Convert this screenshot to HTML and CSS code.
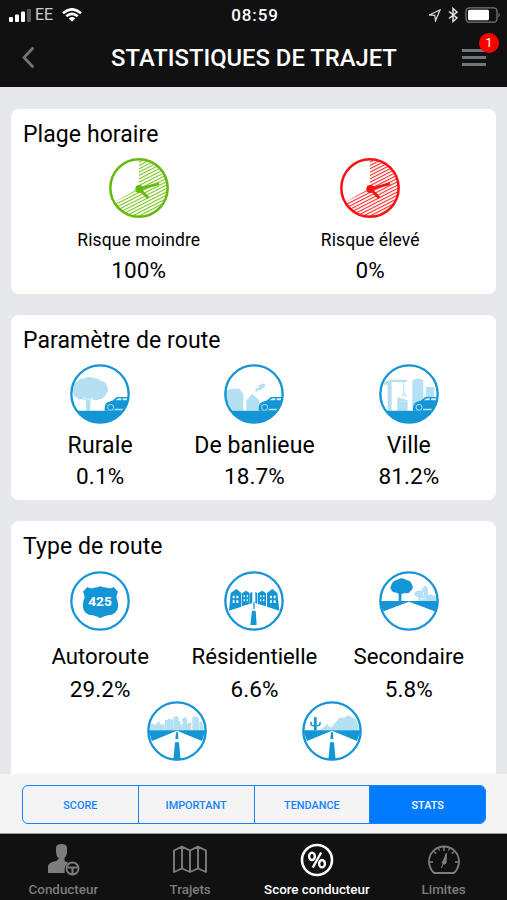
FILE: index.html
```html
<!DOCTYPE html>
<html lang="fr">
<head>
<meta charset="utf-8">
<title>Statistiques de trajet</title>
<link rel="stylesheet" href="styles.css">
</head>
<body>
<svg class="defs" width="0" height="0" aria-hidden="true">
  <defs>
    <pattern id="hatch-green" width="9" height="9" patternUnits="userSpaceOnUse" patternTransform="rotate(-27)"><rect width="9" height="3.4" fill="#7cc520"/></pattern>
    <pattern id="hatch-red" width="9" height="9" patternUnits="userSpaceOnUse" patternTransform="rotate(-27)"><rect width="9" height="3.4" fill="#fb2a2a"/></pattern>
    <symbol id="hands" viewBox="53 38 180 180">
      <circle cx="143" cy="128" r="86" fill="none" stroke="currentColor" stroke-width="7.500"/>
      <circle cx="144" cy="131" r="12" fill="currentColor"/>
      <path d="M144 131 203 115M144 131 171 158" fill="none" stroke="currentColor" stroke-width="8.500"/>
    </symbol>
    <clipPath id="disc"><circle cx="90" cy="90" r="87"/></clipPath>
    <symbol id="car" viewBox="0 0 180 180">
      <path d="M104 134 106 119Q116 111 127 110L141 99H180V140H104Z" fill="#1495d6"/>
      <path d="M136 109 145 103H154V109ZM158 103H176V109H158Z" fill="#d8eef9"/>
      <path d="M106 122H112" stroke="#8fcdec" stroke-width="2"/>
      <circle cx="122" cy="130" r="9" fill="#1495d6" stroke="#cfeaf7" stroke-width="2.500"/>
      <path d="M134 136H180" stroke="#e8f5fb" stroke-width="3"/>
    </symbol>
  </defs>
</svg>
<div class="app">
  <header class="top">
    <div class="status">
      <div class="carrier">
        <svg width="22" height="14" viewBox="0 0 22 14"><g fill="#fff"><rect y="9" width="4" height="5" rx="1"/><rect x="6" y="6.500" width="4" height="7.500" rx="1"/><rect x="12" y="3.500" width="4" height="10.500" rx="1"/><rect x="18" y="1" width="4" height="13" rx="1" fill="#555"/></g></svg>
        <span class="ee">EE</span>
        <svg class="wifi" width="20" height="14" viewBox="0 0 20 14"><g fill="none" stroke="#fff" stroke-width="2.600"><path d="M1 5.200Q10-2.600 19 5.200"/><path d="M4.300 8.300Q10 3.500 15.700 8.300"/></g><path d="M6.700 10.300Q10 7.500 13.300 10.300L10 13.800Z" fill="#fff"/></svg>
      </div>
      <div class="clock">08:59</div>
      <div class="indicators">
        <svg width="13" height="13" viewBox="0 0 13 13"><path d="M1.200 6 12 1 7.500 11.800 6.800 6.300Z" fill="none" stroke="#d4d4d4" stroke-width="1.300"/></svg>
        <svg width="10" height="16" viewBox="0 0 10 16"><path d="M1 4.500 9 11 5 14.500V1.500L9 5 1 11.500" fill="none" stroke="#e4e4e4" stroke-width="1.500"/></svg>
        <svg width="36" height="16" viewBox="0 0 36 16"><rect x="1" y=".8" width="31" height="14.400" rx="3.500" fill="none" stroke="#777" stroke-width="1.300"/><rect x="3" y="2.700" width="21" height="10.600" rx="1.500" fill="#fff"/><path d="M33.500 5.500Q36 8 33.500 10.500Z" fill="#777"/></svg>
      </div>
    </div>
    <nav class="titlebar">
      <svg class="back" width="12" height="21" viewBox="0 0 12 21"><path d="M10.500 1.500 2 10.500 10.500 19.500" fill="none" stroke="#72767a" stroke-width="2.700" stroke-linecap="round"/></svg>
      <h1>STATISTIQUES DE TRAJET</h1>
      <div class="menu"><i></i><i></i><i></i><span class="badge">1</span></div>
    </nav>
  </header>

  <main>
    <section class="card">
      <h2>Plage horaire</h2>
      <div class="row halves">
        <div class="stat green">
          <svg class="icon" viewBox="53 38 180 180"><path d="M143 128V44A84 84 0 1 1 70 170Z" fill="url(#hatch-green)"/><use href="#hands" x="53" y="38" width="180" height="180"/></svg>
          <div class="label">Risque moindre</div><div class="value">100%</div>
        </div>
        <div class="stat red">
          <svg class="icon" viewBox="53 38 180 180"><path d="M143 128V44A84 84 0 1 1 70 170Z" fill="url(#hatch-red)"/><use href="#hands" x="53" y="38" width="180" height="180"/></svg>
          <div class="label">Risque élevé</div><div class="value">0%</div>
        </div>
      </div>
    </section>

    <section class="card">
      <h2>Paramètre de route</h2>
      <div class="row area">
        <div class="stat">
          <svg class="icon" viewBox="0 0 180 180"><g clip-path="url(#disc)"><path d="M10 75Q8 58 23 52Q30 42 43 43Q57 34 72 43Q86 42 92 51Q108 51 110 65Q120 79 108 91Q103 104 88 106Q78 112 66 105L61 112V140H48V110L39 106Q25 109 20 101Q6 96 10 75Z" fill="#b5dff3"/><path d="M39 100 53 107 70 101" fill="none" stroke="#e2f3fb" stroke-width="3"/><use href="#car" width="180" height="180"/><path d="M0 140H180V180H0Z" fill="#1495d6"/></g><circle class="ring" cx="90" cy="90" r="86"/></svg>
          <div class="label">Rurale</div><div class="value">0.1%</div>
        </div>
        <div class="stat">
          <svg class="icon" viewBox="0 0 180 180"><g clip-path="url(#disc)"><g fill="#b5dff3"><path d="M0 78H14L20 74H46L58 90V140H0ZM67 109 85 89 106 109V140H67ZM94 79Q95 68 106 71Q99 61 111 62Q113 55 122 61Q127 68 117 72Q109 83 102 78L96 87Z"/></g><use href="#car" width="180" height="180"/><path d="M0 140H180V180H0Z" fill="#1495d6"/></g><circle class="ring" cx="90" cy="90" r="86"/></svg>
          <div class="label">De banlieue</div><div class="value">18.7%</div>
        </div>
        <div class="stat">
          <svg class="icon" viewBox="0 0 180 180"><g clip-path="url(#disc)"><g fill="#b5dff3"><path d="M15 55 35 47H83V54H38V140H26V62H15ZM55 99 86 109V140H55ZM100 49Q118 38 133 49V140H100ZM141 69H166V140H141Z"/><path d="M74 54V83M70 95 74 83 82 95Z" fill="none" stroke="#b5dff3" stroke-width="3"/></g><path d="M102 54H130M60 112H82" stroke="#d5edf8" stroke-width="2"/><use href="#car" x="-2" width="180" height="180"/><path d="M0 140H180V180H0Z" fill="#1495d6"/></g><circle class="ring" cx="90" cy="90" r="86"/></svg>
          <div class="label">Ville</div><div class="value">81.2%</div>
        </div>
      </div>
    </section>

    <section class="card last">
      <h2>Type de route</h2>
      <div class="row road">
        <div class="stat">
          <svg class="icon" viewBox="44 32 180 180"><circle class="ring" cx="134" cy="122" r="86"/><path d="M96 80Q107 86 116 82L126 81 135 78 144 81 157 82Q166 86 175 80L188 94Q180 109 187 122Q194 154 169 163Q147 165 135 174Q123 165 101 163Q77 155 84 122Q91 109 83 94Z" fill="#1495d6"/><text class="shield" x="134" y="137" text-anchor="middle">425</text></svg>
          <div class="label">Autoroute</div><div class="value">29.2%</div>
        </div>
        <div class="stat">
          <svg class="icon" viewBox="42 32 180 180"><g fill="#1495d6"><path d="M62 98 79 86 94 98V139L57 151ZM96 99 108 91 119 98V131L96 138ZM120 99 127 94V128L120 131ZM202 98 187 86 171 98V139L208 151ZM168 99 157 91 144 98V131L168 138ZM142 99 136 94V128L142 131ZM130 126H134V146H130ZM126 151H137L140 194H121Z"/></g><path d="M68 106H74V114H68ZM79 106H85V114H79ZM68 120H74V128H68ZM79 120H85V128H79ZM101 105H105V111H101ZM110 105H114V111H110ZM101 117H105V123H101ZM110 117H114V123H110ZM180 106H186V114H180ZM191 106H197V114H191ZM180 120H186V128H180ZM191 120H197V128H191ZM150 105H154V111H150ZM159 105H163V111H159ZM150 117H154V123H150ZM159 117H163V123H159Z" fill="#fff"/><circle class="ring" cx="132" cy="122" r="86"/></svg>
          <div class="label">Résidentielle</div><div class="value">6.6%</div>
        </div>
        <div class="stat">
          <svg class="icon" viewBox="39 32 180 180"><path d="M43 122H215V134L206 153 129 124 53 153 44 134Z" fill="#1495d6"/><path d="M98 122V100L88 96Q80 98 76 89Q70 80 78 70Q81 61 92 59Q107 48 121 59Q133 61 137 70Q144 82 136 90Q128 102 115 98L106 102V122Z" fill="#1495d6"/><path d="M157 122V111Q142 108 146 97Q154 88 168 91Q170 77 179 76Q187 80 186 94V104Q194 99 200 105L208 106 213 122Z" fill="#b5dff3"/><path d="M173 94 171 103 177 111M162 115H181" fill="none" stroke="#fff" stroke-width="2"/><circle class="ring" cx="129" cy="122" r="86"/></svg>
          <div class="label">Secondaire</div><div class="value">5.8%</div>
        </div>
      </div>
      <div class="row more">
        <div class="stat">
          <svg class="icon" viewBox="52 34 180 180"><path d="M62 122V104L68 100 75 107 80 102 84 96H90V104H94V122H106V91H114V88H126V92H131V83L141 78 147 84V94H152V104H158V88L166 81 172 88V102H176V99H184V122H188V84L194 79 207 84V96H217L222 122Z" fill="#b5dff3"/><path d="M94 104H106V122H94Z" fill="#b5dff3"/><path d="M104 95V121M132 94V121M157 97V121M186 99V121M209 97V121" stroke="#dff2fa" stroke-width="2"/><path d="M56 122H228L217 154 142 123 67 154Z" fill="#1495d6"/><path d="M139 128H145L146 148H137ZM136 158H148L153 212H131Z" fill="#1495d6"/><circle class="ring" cx="142" cy="124" r="86"/></svg>
        </div>
        <div class="stat">
          <svg class="icon" viewBox="513 34 180 180"><path d="M568 122 588 104 600 114 614 98 625 84 640 84 651 76 661 82 675 88 685 122Z" fill="#b5dff3"/><path d="M549 122V84Q553 79 557 84V122Z" fill="#1495d6"/><path d="M540 96V102Q540 108 549 108M567 97V103Q567 108 557 108" fill="none" stroke="#1495d6" stroke-width="4.500"/><path d="M517 122H689L678 154 603 123 528 154Z" fill="#1495d6"/><path d="M600 128H606L607 148H598ZM597 158H609L614 212H592Z" fill="#1495d6"/><circle class="ring" cx="603" cy="124" r="86"/></svg>
        </div>
      </div>
    </section>
  </main>

  <div class="segbar">
    <div class="segments"><span>SCORE</span><span>IMPORTANT</span><span>TENDANCE</span><span class="on">STATS</span></div>
  </div>

  <footer class="tabs">
    <div class="tab">
      <svg width="34" height="34" viewBox="0 0 34 34"><path d="M10 5Q10 1 15.500 1T21 5V10Q20.500 13 18.500 15V17.500Q19 19 22.500 19.500Q17.500 23 18.800 30H2V23Q2.500 20 8 18.500Q12.500 17.500 12.500 15Q10 13 10 9Z" fill="#7d7d7d"/><circle cx="26.500" cy="25.500" r="6" fill="#111" stroke="#7d7d7d" stroke-width="1.900"/><path d="M21.500 24.500H31.500M26.500 25V31" stroke="#7d7d7d" stroke-width="2.200"/></svg>
      <span>Conducteur</span>
    </div>
    <div class="tab">
      <svg width="34" height="34" viewBox="0 0 34 34"><path d="M1 7.500 9 3.700 17 7.500 25 3.700 33 7.500V29L25 25.500 17 29 9 25.500 1 29ZM9 4V26M17 7V29M25 4V26" fill="none" stroke="#7d7d7d" stroke-width="1.900" stroke-linejoin="round"/></svg>
      <span>Trajets</span>
    </div>
    <div class="tab on">
      <svg width="34" height="34" viewBox="0 0 34 34"><circle cx="17" cy="17" r="15" fill="none" stroke="#fff" stroke-width="2.600"/><g fill="none" stroke="#fff" stroke-width="2.400"><ellipse cx="12" cy="13.300" rx="2.900" ry="3.700"/><ellipse cx="22" cy="20.700" rx="2.900" ry="3.700"/><path d="M21.200 9.500 12.800 24.500"/></g></svg>
      <span>Score conducteur</span>
    </div>
    <div class="tab">
      <svg width="34" height="34" viewBox="0 0 34 34"><path d="M7 30Q2 25 2 18.500A15 15 0 0 1 32 18.500Q32 25 27 30Z" fill="none" stroke="#7d7d7d" stroke-width="1.800" stroke-linejoin="round"/><path d="M17 4V8M7 8.500 9.300 10.800M27 8.500 24.700 10.800M2 19H6M32 19H28M11 4.500 12.500 7.500M23 4.500 21.500 7.500" stroke="#7d7d7d" stroke-width="1.500"/><path d="M19.500 10 19 20Q17.500 22 15.500 20.500Q14.500 18.500 16.500 17.500ZM16 21 14.500 25" fill="#7d7d7d" stroke="#7d7d7d"/></svg>
      <span>Limites</span>
    </div>
  </footer>
</div>
</body>
</html>
```
FILE: styles.css
```css
* { box-sizing: border-box; }
body { margin: 0; font-family: Roboto, "Liberation Sans", sans-serif; color: #000; }
svg { display: block; flex: none; }
.defs { position: absolute; }
.app { width: 507px; height: 900px; display: flex; flex-direction: column; overflow: hidden; background: #e6e8ec; }

.top { height: 87px; flex: none; background: #111; color: #fff; }
.status { height: 30px; padding: 0 6px 0 9px; display: grid; grid-template-columns: 1fr auto 1fr; align-items: center; }
.carrier, .indicators { display: flex; align-items: center; }
.indicators { justify-content: flex-end; gap: 7px; }
.ee { margin-left: 4px; font-size: 16px; line-height: 18px; color: #ccc; }
.wifi { margin-left: 9px; }
.clock { font-size: 17px; font-weight: 500; letter-spacing: 0.9px; line-height: 30px; }
.titlebar { height: 54px; padding: 0 21px 0 22px; display: flex; align-items: center; justify-content: space-between; }
h1 { margin: 0; padding: 2px 0 0 12px; font-size: 23.800px; font-weight: 500; line-height: 54px; white-space: nowrap; flex: 1; text-align: center; }
.back + h1 { padding-left: 12px; }
.menu { position: relative; width: 24px; display: flex; flex-direction: column; gap: 4px; }
.menu i { height: 3px; background: #72767a; }
.badge { position: absolute; top: -16px; left: 17px; width: 20px; height: 20px; border-radius: 50%; background: #f00; font-size: 13px; line-height: 20px; text-align: center; }

main { flex: 1; min-height: 0; overflow: hidden; padding: 22px 11px 0; display: flex; flex-direction: column; gap: 21px; }
.card { height: 185px; flex: none; padding: 11px 10px 11px 12px; border-radius: 8px; background: #fff; }
.last { height: 300px; }
h2 { margin: 0; font-size: 23px; font-weight: 400; line-height: 30px; letter-spacing: 0.080px; }
.row { display: flex; justify-content: center; margin-top: 8px; }
.stat { width: 154.600px; display: flex; flex-direction: column; align-items: center; white-space: nowrap; }
.halves .stat { width: 232px; }
.icon { width: 60px; height: 60px; }
.ring { fill: none; stroke: #1495d6; stroke-width: 7px; }
.green { color: #65b90c; }
.red { color: #fa1111; }
.label, .value { color: #000; font-size: 22.500px; line-height: 30px; letter-spacing: 0.100px; }
.halves .label { margin-top: 7px; font-size: 17.500px; }
.area .label { margin-top: 7px; font-size: 23px; }
.road { margin-top: 9px; }
.road .label { margin-top: 10px; font-size: 22.200px; letter-spacing: 0; }
.road .value { margin-top: 3px; }
.more { margin-top: -3px; }
.shield { fill: #fff; font: 700 41px Roboto, sans-serif; }

.segbar { height: 60px; flex: none; padding: 11px 21px 9px 22px; background: #f4f4f4; border-bottom: 1px solid #999; }
.segments { height: 39px; display: flex; border: 1px solid #1682fb; border-radius: 6px; overflow: hidden; }
.segments span { flex: 1; font-size: 10.900px; font-weight: 500; line-height: 40px; text-align: center; color: #1682fb; border-left: 1px solid #1682fb; }
.segments span:first-child { border-left: 0; }
.segments .on { background: #007aff; color: #fff; }

.tabs { height: 66px; flex: none; display: flex; background: #111; color: #7d7d7d; }
.tab { flex: 1; padding-top: 9px; display: flex; flex-direction: column; align-items: center; font-size: 13.400px; font-weight: 500; line-height: 18px; white-space: nowrap; }
.tab span { margin-top: 4px; }
.tab.on { color: #fff; }
```
